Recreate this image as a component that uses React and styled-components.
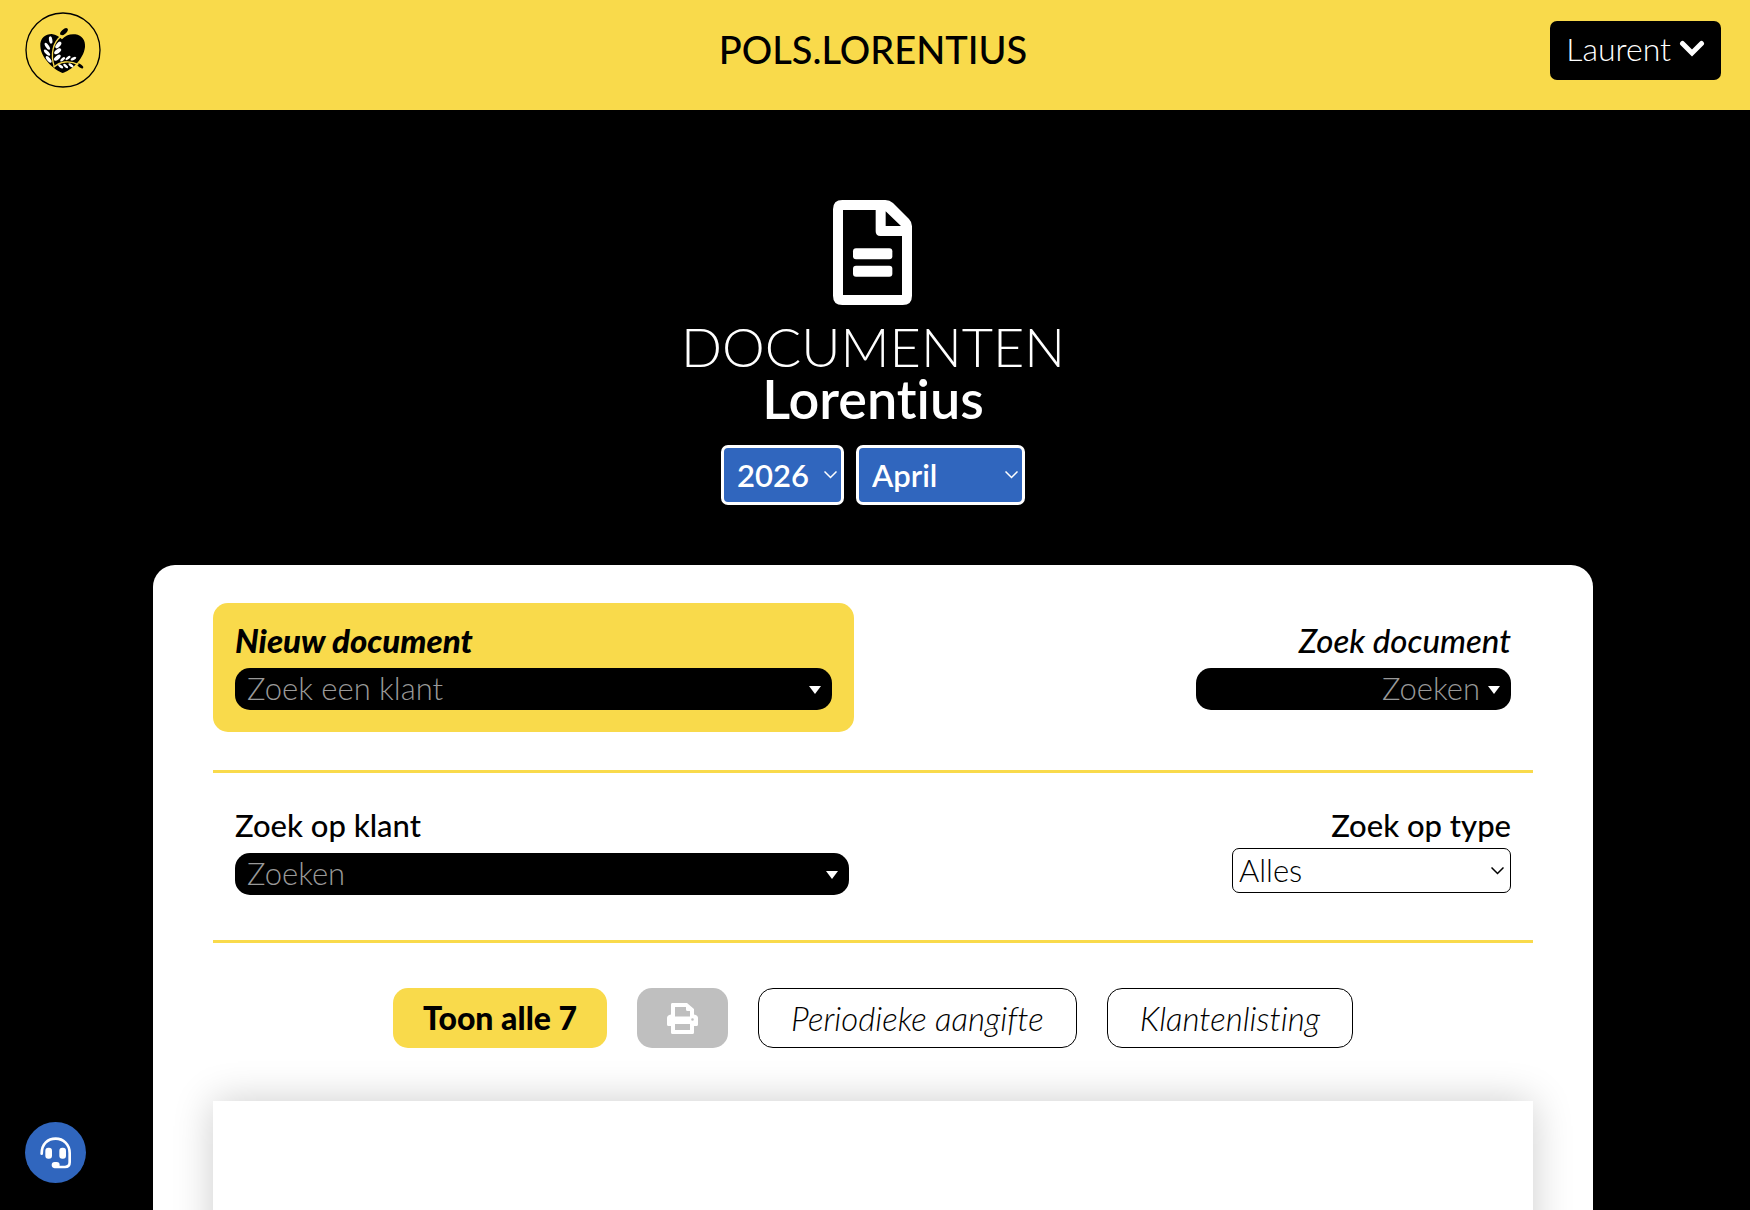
import React, { useState } from "react";
import styled, { createGlobalStyle } from "styled-components";

const maanden = [
    'Januari', 'Februari', 'Maart', 'April', 'Mei', 'Juni', 'Juli',
    'Augustus', 'September', 'Oktober', 'November', 'December'
];

const Logo = () => (
    <svg width="76" height="76" viewBox="0 0 228 228" aria-hidden="true">
        <circle cx="114" cy="114" r="111" fill="none" stroke="#000" strokeWidth="4" />
        <path d="M113 183C95 178 48 143 46 103C44 78 62 66 80 66C94 67 103 75 111 82C120 70 136 65 151 67C171 70 182 85 180 105C176 143 136 177 113 183Z" />
        <ellipse cx="117" cy="59" rx="14" ry="7" transform="rotate(-42 117 59)" />
        <ellipse cx="166" cy="162" rx="10" ry="5" transform="rotate(35 166 162)" />
        <path d="M88 165C76 128 82 90 112 70" fill="none" stroke="#f9da4b" strokeWidth="4" />
        <path d="M86 166C104 148 134 144 160 158" fill="none" stroke="#f9da4b" strokeWidth="4" />
        <g fill="#fff">
            <ellipse cx="77" cy="84" rx="11" ry="5" transform="rotate(80 77 84)" />
            <ellipse cx="67" cy="103" rx="12" ry="5" transform="rotate(55 67 103)" />
            <ellipse cx="66" cy="122" rx="12" ry="5" transform="rotate(45 66 122)" />
            <ellipse cx="71" cy="142" rx="12" ry="5" transform="rotate(50 71 142)" />
            <ellipse cx="100" cy="99" rx="12" ry="6" transform="rotate(-50 100 99)" />
            <ellipse cx="98" cy="118" rx="12" ry="6" transform="rotate(-35 98 118)" />
            <ellipse cx="97" cy="137" rx="12" ry="6" transform="rotate(-40 97 137)" />
            <ellipse cx="113" cy="142" rx="9" ry="4" transform="rotate(-40 113 142)" />
            <ellipse cx="129" cy="138" rx="9" ry="4" transform="rotate(-35 129 138)" />
            <ellipse cx="145" cy="140" rx="9" ry="4" transform="rotate(-25 145 140)" />
            <ellipse cx="107" cy="163" rx="9" ry="4" transform="rotate(35 107 163)" />
            <ellipse cx="122" cy="162" rx="9" ry="4" transform="rotate(40 122 162)" />
            <ellipse cx="138" cy="160" rx="9" ry="4" transform="rotate(35 138 160)" />
        </g>
    </svg>
);

const IconoDocument = () => (
    <svg width="80" height="105" viewBox="0 0 240 315" fill="#fff" aria-hidden="true">
        <path
            fillRule="evenodd"
            d="M28 0H157Q170 0 180 9L228 57Q237 66 237 79V287Q237 315 209 315H28Q0 315 0 287V28Q0 0 28 0ZM30 30V285H207V108H142Q128 108 128 94V30ZM158 34V78H204Z"
        />
        <rect x="60" y="145" width="118" height="33" rx="9" />
        <rect x="60" y="197" width="118" height="33" rx="9" />
    </svg>
);

const IconoPrint = () => (
    <svg width="31" height="31" viewBox="0 0 31 31" fill="#fff" aria-hidden="true">
        <path
            fillRule="evenodd"
            d="M5 0H20L27 6V11.500Q31 12 31 15V21.500Q31 23 29.500 23H27V29.500Q27 31 25.500 31H5.500Q4 31 4 29.500V23H1.500Q0 23 0 21.500V15Q0 12 4 11.500V1.500Q4 0 5 0ZM8 4V13.500H23V8H20.500Q19 8 19 6.500V4ZM8 21V27H23V21ZM25.500 15.200A1.300 1.300 0 1 0 25.500 17.800A1.300 1.300 0 1 0 25.500 15.200Z"
        />
    </svg>
);

const IconoHeadset = () => (
    <svg width="32" height="32" viewBox="0 0 96 96" aria-hidden="true">
        <path
            d="M5 50C5 20 24 5 47 5C70 5 89 22 89 48V76Q89 90 75 90H44"
            fill="none" stroke="#fff" strokeWidth="8" strokeLinecap="round"
        />
        <rect x="16" y="32" width="20" height="33" rx="9" fill="#fff" />
        <rect x="58" y="32" width="20" height="33" rx="9" fill="#fff" />
        <rect x="35" y="75" width="24" height="18" rx="9" fill="#fff" />
    </svg>
);

const Flecha = () => (
    <svg width="13" height="8" viewBox="0 0 13 8" fill="none" stroke="currentColor" strokeWidth="1.500" aria-hidden="true">
        <path d="M0.500 0.500L6.500 6.500L12.500 0.500" />
    </svg>
);

const Zoekveld = ({id, label, placeholder, cursief, gewicht, rechts}) => {
    const [waarde, setWaarde] = useState('');

    return (
        <Veld $rechts={rechts}>
            <Label htmlFor={id} $cursief={cursief} $gewicht={gewicht}>{label}</Label>
            <Omhulsel>
                <Input
                    id={id}
                    type='text'
                    value={waarde}
                    onChange={(e) => setWaarde(e.target.value)}
                    placeholder={placeholder}
                    $rechts={rechts}
                />
                <Driehoek />
            </Omhulsel>
        </Veld>
    );
}

const App = () => {
    const [jaar, setJaar] = useState('2026');
    const [maand, setMaand] = useState('April');
    const [type, setType] = useState('Alles');

    return (
        <Pagina>
            <GlobalStyle />
            <Header>
                <LogoLink href="#" aria-label="Home"><Logo /></LogoLink>
                <Merk>POLS.LORENTIUS</Merk>
                <Gebruiker type="button">
                    Laurent
                    <svg width="26" height="18" viewBox="0 0 26 18" fill="none" stroke="#fff" strokeWidth="5" strokeLinecap="round" aria-hidden="true">
                        <path d="M3.500 3.500L13 13L22.500 3.500" />
                    </svg>
                </Gebruiker>
            </Header>

            <Main>
                <IconoDocument />
                <Titel>Documenten<strong>Lorentius</strong></Titel>

                <Periode>
                    <SelectOmhulsel $breedte={123}>
                        <PeriodeSelect aria-label="Jaar" value={jaar} onChange={(e) => setJaar(e.target.value)}>
                            <option>2025</option>
                            <option>2026</option>
                        </PeriodeSelect>
                        <Flecha />
                    </SelectOmhulsel>
                    <SelectOmhulsel $breedte={169}>
                        <PeriodeSelect aria-label="Maand" value={maand} onChange={(e) => setMaand(e.target.value)}>
                            {maanden.map((m) => <option key={m}>{m}</option>)}
                        </PeriodeSelect>
                        <Flecha />
                    </SelectOmhulsel>
                </Periode>

                <Kaart>
                    <Rij>
                        <NieuwDocument>
                            <Zoekveld id="nieuw" label="Nieuw document" placeholder="Zoek een klant" cursief gewicht={900} />
                        </NieuwDocument>
                        <Kolom $breedte={315}>
                            <Zoekveld id="document" label="Zoek document" placeholder="Zoeken" cursief gewicht={500} rechts />
                        </Kolom>
                    </Rij>

                    <FilterRij>
                        <Kolom $breedte={614}>
                            <Zoekveld id="klant" label="Zoek op klant" placeholder="Zoeken" gewicht={500} />
                        </Kolom>
                        <Kolom $breedte={279}>
                            <Veld $rechts $dicht>
                                <Label htmlFor="type" $gewicht={500}>Zoek op type</Label>
                                <SelectOmhulsel>
                                    <TypeSelect id="type" value={type} onChange={(e) => setType(e.target.value)}>
                                        <option>Alles</option>
                                        <option>Periodieke aangifte</option>
                                        <option>Klantenlisting</option>
                                    </TypeSelect>
                                    <Flecha />
                                </SelectOmhulsel>
                            </Veld>
                        </Kolom>
                    </FilterRij>

                    <Knoppen>
                        <ActieveKnop type="button">Toon alle 7</ActieveKnop>
                        <PrintKnop type="button" aria-label="Afdrukken"><IconoPrint /></PrintKnop>
                        <Knop type="button">Periodieke aangifte</Knop>
                        <Knop type="button">Klantenlisting</Knop>
                    </Knoppen>

                    <Blad />
                </Kaart>
            </Main>

            <Help type="button" aria-label="Help"><IconoHeadset /></Help>
        </Pagina>
    );
}

const GlobalStyle = createGlobalStyle`
    * {
        box-sizing: border-box;
    }

    body {
        margin: 0;
        background: #000;
        color: #000;
        font-family: Lato, sans-serif;
        font-size: 31px;
        font-weight: 300;
        font-variant-ligatures: no-common-ligatures;
        line-height: 34px;
    }

    button, input, select {
        font: inherit;
        font-variant-ligatures: no-common-ligatures;
    }

    svg {
        display: block;
    }
`;

const Pagina = styled.div`
    display: flex;
    flex-direction: column;
    min-height: 100vh;
`;

const Header = styled.header`
    display: grid;
    grid-template-columns: 1fr auto 1fr;
    align-items: center;
    height: 110px;
    padding: 0 29px 10px 25px;
    background: #f9da4b;
`;

const LogoLink = styled.a`
    justify-self: start;
    color: #000;
`;

const Merk = styled.div`
    padding-bottom: 2px;
    font-size: 38px;
    font-weight: 500;
`;

const Gebruiker = styled.button`
    display: flex;
    align-items: center;
    justify-self: end;
    gap: 8px;
    height: 59px;
    padding: 0 16px 2px;
    border: none;
    border-radius: 7px;
    background: #000;
    color: #fff;
    font-size: 32px;
    cursor: pointer;
`;

const Main = styled.main`
    display: flex;
    flex: 1;
    flex-direction: column;
    align-items: center;
    padding: 90px 4px 0 0;
`;

const Titel = styled.h1`
    margin: 16px 0 20px;
    color: #fff;
    font-size: 54px;
    font-weight: 300;
    line-height: 52px;
    text-align: center;
    text-transform: uppercase;

    strong {
        display: block;
        font-weight: 600;
        text-transform: none;
    }
`;

const Periode = styled.div`
    display: flex;
    gap: 12px;
    margin-bottom: 60px;
`;

const SelectOmhulsel = styled.div`
    position: relative;
    width: ${(props) => props.$breedte ? `${props.$breedte}px` : '100%'};
    color: ${(props) => props.$breedte ? '#fff' : '#000'};

    svg {
        position: absolute;
        top: calc(50% - 4px);
        right: 7px;
        pointer-events: none;
    }
`;

const PeriodeSelect = styled.select`
    display: block;
    width: 100%;
    height: 60px;
    padding: 0 13px;
    appearance: none;
    border: 3px solid #fff;
    border-radius: 7px;
    background: #3066be;
    color: #fff;
    font-weight: 600;
`;

const TypeSelect = styled.select`
    display: block;
    width: 100%;
    height: 45px;
    padding: 0 6px 2px;
    appearance: none;
    border: 1px solid #000;
    border-radius: 7px;
    background: #fff;
    color: #000;
`;

const Kaart = styled.section`
    display: flex;
    flex: 1;
    flex-direction: column;
    width: 100%;
    max-width: 1440px;
    padding: 38px 60px 0;
    border-radius: 22px 22px 0 0;
    background: #fff;
`;

const Rij = styled.div`
    display: flex;
    justify-content: space-between;
    padding-bottom: 38px;
    border-bottom: 3px solid #f9da4b;

    > :last-child {
        padding: 20px 22px 0 0;
    }
`;

const FilterRij = styled.div`
    display: flex;
    justify-content: space-between;
    padding: 35px 22px 45px;
    border-bottom: 3px solid #f9da4b;
`;

const NieuwDocument = styled.div`
    flex: 0 1 641px;
    padding: 20px 22px 22px;
    border-radius: 15px;
    background: #f9da4b;
`;

const Kolom = styled.div`
    box-sizing: content-box;
    flex: 0 1 ${(props) => props.$breedte}px;
`;

const Veld = styled.div`
    display: flex;
    flex-direction: column;
    gap: ${(props) => props.$dicht ? '6px' : '11px'};
    text-align: ${(props) => props.$rechts ? 'right' : 'left'};
`;

const Label = styled.label`
    font-size: ${(props) => props.$cursief ? '33px' : '31px'};
    font-style: ${(props) => props.$cursief ? 'italic' : 'normal'};
    font-weight: ${(props) => props.$gewicht};
`;

const Omhulsel = styled.div`
    position: relative;
`;

const Input = styled.input`
    display: block;
    width: 100%;
    height: 42px;
    padding: 0 31px 2px 12px;
    border: none;
    border-radius: 15px;
    background: #000;
    color: #fff;
    text-align: ${(props) => props.$rechts ? 'right' : 'left'};

    &::placeholder {
        color: #999;
        opacity: 1;
    }
`;

const Driehoek = styled.span`
    position: absolute;
    top: 18px;
    right: 11px;
    border: 6px solid transparent;
    border-top: 8px solid #fff;
    border-bottom: none;
    pointer-events: none;
`;

const Knoppen = styled.div`
    display: flex;
    justify-content: center;
    gap: 30px;
    margin: 45px 0 53px;
`;

const Knop = styled.button`
    height: 60px;
    padding: 0 32px;
    border: 1px solid #000;
    border-radius: 15px;
    background: #fff;
    color: #000;
    font-size: 33px;
    font-style: italic;
    cursor: pointer;
`;

const ActieveKnop = styled(Knop)`
    padding: 0 30px;
    border: none;
    background: #f9da4b;
    font-size: 32px;
    font-style: normal;
    font-weight: 900;
`;

const PrintKnop = styled(Knop)`
    padding: 0 30px;
    border: none;
    background: #bfbfbf;
`;

const Blad = styled.div`
    flex: 1;
    min-height: 400px;
    background: #fff;
    box-shadow: 0 0 38px rgba(0,0,0,.2);
`;

const Help = styled.button`
    position: fixed;
    bottom: 27px;
    left: 25px;
    display: flex;
    align-items: center;
    justify-content: center;
    width: 61px;
    height: 61px;
    padding: 0;
    border: none;
    border-radius: 50%;
    background: #3066be;
    cursor: pointer;
`;

export default App;
